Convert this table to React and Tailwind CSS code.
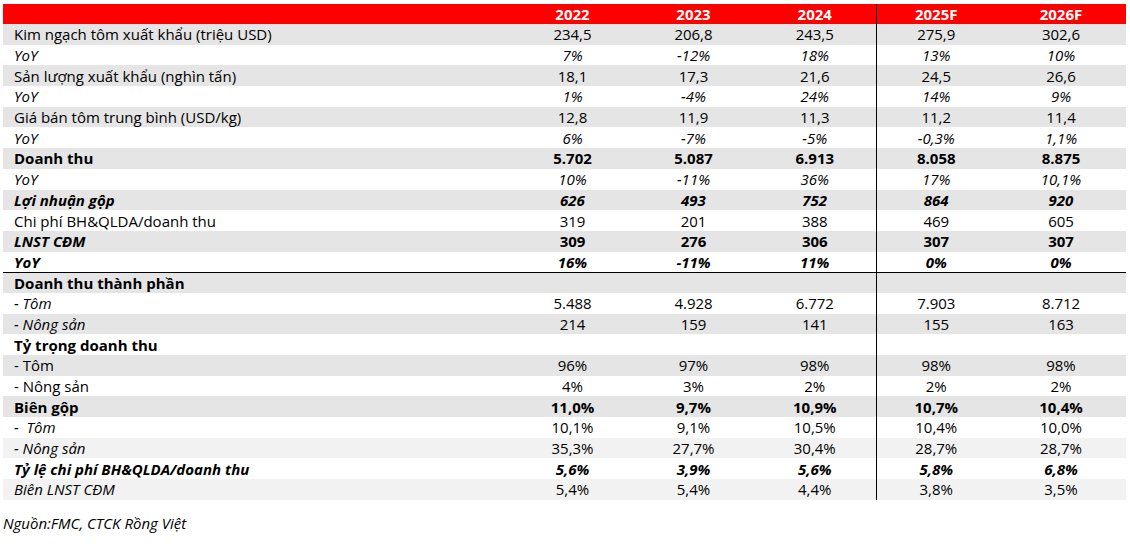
import React from 'react';

const G = 'bg-[#e5e5e5]';
const L = 'bg-[#f2f2f2]';
const W = 'bg-white';

// style: n normal, i italic, b bold, bi bold italic ; vs = style of values
const rows = [
  { label: 'Kim ngạch tôm xuất khẩu (triệu USD)', v: ['234,5', '206,8', '243,5', '275,9', '302,6'], bg: G, ls: 'n', vs: 'n' },
  { label: 'YoY', v: ['7%', '-12%', '18%', '13%', '10%'], bg: W, ls: 'i', vs: 'i' },
  { label: 'Sản lượng xuất khẩu (nghìn tấn)', v: ['18,1', '17,3', '21,6', '24,5', '26,6'], bg: G, ls: 'n', vs: 'n' },
  { label: 'YoY', v: ['1%', '-4%', '24%', '14%', '9%'], bg: W, ls: 'i', vs: 'i' },
  { label: 'Giá bán tôm trung bình (USD/kg)', v: ['12,8', '11,9', '11,3', '11,2', '11,4'], bg: G, ls: 'n', vs: 'n' },
  { label: 'YoY', v: ['6%', '-7%', '-5%', '-0,3%', '1,1%'], bg: W, ls: 'i', vs: 'i' },
  { label: 'Doanh thu', v: ['5.702', '5.087', '6.913', '8.058', '8.875'], bg: G, ls: 'b', vs: 'b' },
  { label: 'YoY', v: ['10%', '-11%', '36%', '17%', '10,1%'], bg: W, ls: 'i', vs: 'i' },
  { label: 'Lợi nhuận gộp', v: ['626', '493', '752', '864', '920'], bg: G, ls: 'bi', vs: 'bi' },
  { label: 'Chi phí BH&QLDA/doanh thu', v: ['319', '201', '388', '469', '605'], bg: W, ls: 'n', vs: 'n' },
  { label: 'LNST CĐM', v: ['309', '276', '306', '307', '307'], bg: G, ls: 'bi', vs: 'b' },
  { label: 'YoY', v: ['16%', '-11%', '11%', '0%', '0%'], bg: W, ls: 'bi', vs: 'bi', line: true },
  { label: 'Doanh thu thành phần', v: ['', '', '', '', ''], bg: G, ls: 'b', vs: 'n' },
  { label: '- Tôm', v: ['5.488', '4.928', '6.772', '7.903', '8.712'], bg: W, ls: 'i', vs: 'n' },
  { label: '- Nông sản', v: ['214', '159', '141', '155', '163'], bg: G, ls: 'i', vs: 'n' },
  { label: 'Tỷ trọng doanh thu', v: ['', '', '', '', ''], bg: W, ls: 'b', vs: 'n' },
  { label: '- Tôm', v: ['96%', '97%', '98%', '98%', '98%'], bg: G, ls: 'n', vs: 'n' },
  { label: '- Nông sản', v: ['4%', '3%', '2%', '2%', '2%'], bg: W, ls: 'n', vs: 'n' },
  { label: 'Biên gộp', v: ['11,0%', '9,7%', '10,9%', '10,7%', '10,4%'], bg: G, ls: 'b', vs: 'b' },
  { label: '-  Tôm', v: ['10,1%', '9,1%', '10,5%', '10,4%', '10,0%'], bg: W, ls: 'i', vs: 'n' },
  { label: '- Nông sản', v: ['35,3%', '27,7%', '30,4%', '28,7%', '28,7%'], bg: L, ls: 'i', vs: 'n' },
  { label: 'Tỷ lệ chi phí BH&QLDA/doanh thu', v: ['5,6%', '3,9%', '5,6%', '5,8%', '6,8%'], bg: W, ls: 'bi', vs: 'bi' },
  { label: 'Biên LNST CĐM', v: ['5,4%', '5,4%', '4,4%', '3,8%', '3,5%'], bg: L, ls: 'i', vs: 'n' },
];

const styleCls = {
  n: '',
  i: 'italic',
  b: 'font-bold',
  bi: 'font-bold italic',
};

const years = ['2022', '2023', '2024', '2025F', '2026F'];

export default function App() {
  return (
    <div className="w-[1130px] h-[544px] bg-white text-black font-['Open_Sans',sans-serif] text-[15px] pt-[4px] pl-[3px]">
      <table className="border-collapse table-fixed w-[1123px]">
        <colgroup>
          <col className="w-[509px]" />
          <col className="w-[121px]" />
          <col className="w-[121px]" />
          <col className="w-[122px]" />
          <col className="w-[120px]" />
          <col className="w-[130px]" />
        </colgroup>
        <thead>
          <tr className="bg-[#ff0000] text-white font-bold h-[20px]">
            <th className="p-0"></th>
            {years.map((y, i) => (
              <th key={y} className={`p-0 text-center leading-[20px] ${i === 3 ? 'border-l border-black' : ''}`}>{y}</th>
            ))}
          </tr>
        </thead>
        <tbody>
          {rows.map((r, idx) => (
            <tr key={idx} className={`${r.bg} h-[20.7px] ${r.line ? 'border-b border-black' : ''}`}>
              <td className={`p-0 pl-[11px] h-[20.7px] leading-[20px] whitespace-pre ${styleCls[r.ls]}`}>{r.label}</td>
              {r.v.map((v, i) => (
                <td key={i} className={`p-0 text-center leading-[20px] ${styleCls[r.vs]} ${i === 3 ? 'border-l border-black' : ''}`}>{v}</td>
              ))}
            </tr>
          ))}
        </tbody>
      </table>
      <p className="italic mt-[13px] leading-[20px]">Nguồn:FMC, CTCK Rồng Việt</p>
    </div>
  );
}
